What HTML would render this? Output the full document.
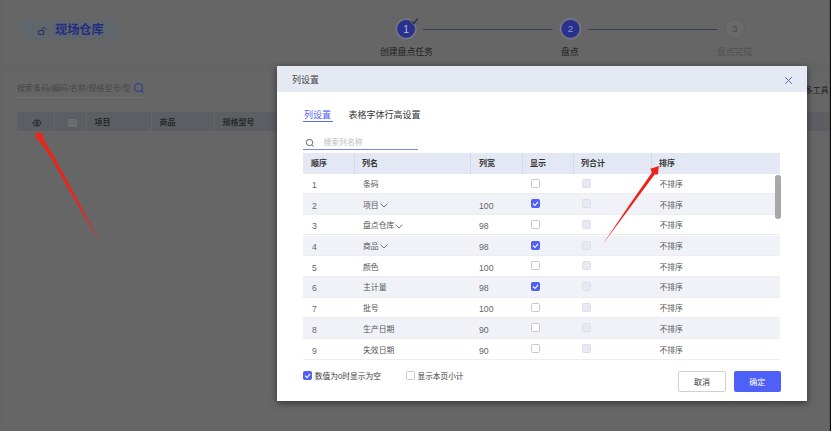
<!DOCTYPE html>
<html lang="zh-CN">
<head>
<meta charset="utf-8">
<title>列设置</title>
<style>
html,body{margin:0;padding:0;}
body{width:831px;height:431px;overflow:hidden;background:#646464;font-family:"Liberation Sans","Noto Sans CJK SC",sans-serif;font-size:8px;color:#333;position:relative;}
.abs{position:absolute;white-space:nowrap;line-height:1;}
#page{position:absolute;left:0;top:0;width:831px;height:431px;overflow:hidden;}
/* dimmed background page */
.tag{left:22px;top:19.5px;width:96px;height:20.5px;background:#60676c;border-radius:2px;}
.tagtxt{left:55px;top:24px;font-size:12.2px;font-weight:bold;color:#222d80;}
.bgtxt{color:#3f3f3f;}
.thead{left:17px;top:112px;width:814px;height:19.4px;background:#5c5e63;}
/* modal */
#modal{position:absolute;left:277px;top:66px;width:530px;height:334.5px;background:#fff;box-shadow:0 2px 7px rgba(0,0,0,.5);}
#mhead{position:absolute;left:0;top:0;width:530px;height:26px;background:#e5e9f4;}
.row{position:absolute;left:26px;width:477px;height:20.7px;}
.row.alt{background:#f0f2f8;}
.row{border-bottom:1px solid #ebedf3;box-sizing:border-box;}
.row .c.d{font-size:8.7px;color:#666}
.row .c{position:absolute;top:1.5px;line-height:20.7px;font-size:7.85px;color:#565656;white-space:nowrap;}
.dd{margin-left:1px;vertical-align:middle;position:relative;top:0px}
.ck{position:absolute;}
.row .sep{position:absolute;left:0;bottom:0;width:100%;height:1px;background:#eceef4}
.cb{position:absolute;width:7px;height:7px;border:1px solid #c8c8cc;border-radius:1.5px;background:#fff;box-sizing:content-box;}
.cb.on{background:#4f60f8;border-color:#4f60f8;}
.cb.dis{background:#e8eaf3;border-color:#dcdfea;}
</style>
</head>
<body>
<div id="page">
  <!-- background -->
  <div class="abs" style="left:4px;top:0;width:827px;height:63px;background:#666"></div>
  <div class="abs" style="left:4px;top:71px;width:827px;height:360px;background:#666"></div>
  <div class="abs tag"></div>
  <svg class="abs" style="left:36px;top:24px" width="12" height="12" viewBox="0 0 12 12"><path d="M2.6 6.6h5v3.8h-5zM6 6.6V5.6a1.9 1.9 0 0 1 3.8 0" fill="none" stroke="#232a60" stroke-width="0.9"/></svg>
  <div class="abs tagtxt">现场仓库</div>

  <!-- stepper -->
  <svg class="abs" style="left:380px;top:9px" width="400" height="40" viewBox="0 0 400 40">
    <line x1="43" y1="20.5" x2="172.5" y2="20.5" stroke="#3b3d5c" stroke-width="1"/>
    <line x1="207.5" y1="20.5" x2="337" y2="20.5" stroke="#3b3d5c" stroke-width="1"/>
    <circle cx="26.1" cy="19.9" r="10.1" fill="none" stroke="#767ca4" stroke-width="1"/>
    <circle cx="26.1" cy="19.9" r="8.8" fill="#28328c"/>
    <circle cx="190.5" cy="19.8" r="10.3" fill="none" stroke="#767ca4" stroke-width="1"/>
    <circle cx="190.5" cy="19.8" r="8.9" fill="#28328c"/>
    <circle cx="354.8" cy="19.8" r="10.3" fill="none" stroke="#626262" stroke-width="1"/>
    <circle cx="354.8" cy="19.8" r="8.9" fill="#6a6a6a"/>
    <path d="M32.0 12.6 L33.9 14.4 L37.7 9.6" fill="none" stroke="#666666" stroke-width="3.4" stroke-linecap="round"/>
    <path d="M32.0 12.6 L33.9 14.4 L37.7 9.6" fill="none" stroke="#1c2452" stroke-width="1.1"/>
    <text x="26.1" y="23.6" font-size="10.5" fill="#b4b8d6" text-anchor="middle" font-family="Liberation Sans, sans-serif">1</text>
    <text x="190.5" y="23.3" font-size="9.8" fill="#8f95cc" text-anchor="middle" font-family="Liberation Sans, sans-serif">2</text>
    <text x="354.8" y="23.4" font-size="9.8" fill="#484848" text-anchor="middle" font-family="Liberation Sans, sans-serif">3</text>
  </svg>
  <div class="abs" style="left:380px;top:48px;font-size:8.8px;color:#1c1c1c">创建盘点任务</div>
  <div class="abs" style="left:561px;top:48px;font-size:8.8px;color:#1c1c1c">盘点</div>
  <div class="abs" style="left:717px;top:48px;font-size:8.8px;color:#505050">盘点完成</div>

  <!-- search -->
  <div class="abs" style="left:17px;top:84.7px;font-size:8.1px;color:#474747;letter-spacing:-0.02px">搜索条码/编码/名称/规格型号/型</div>
  <svg class="abs" style="left:133px;top:82px" width="12" height="12" viewBox="0 0 12 12"><circle cx="5.5" cy="5.5" r="4" fill="none" stroke="#333f8c" stroke-width="1.2"/><line x1="8.5" y1="8.5" x2="10.5" y2="10.5" stroke="#333f8c" stroke-width="1.2"/></svg>
  <div class="abs" style="left:17px;top:97px;width:128px;height:1px;background:#707070"></div>

  <!-- bg table header -->
  <div class="abs thead"></div>
  <div class="abs" style="left:54px;top:112px;width:1px;height:19.4px;background:#65676c"></div>
  <div class="abs" style="left:86px;top:112px;width:1px;height:19.4px;background:#65676c"></div>
  <div class="abs" style="left:150.5px;top:112px;width:1px;height:19.4px;background:#65676c"></div>
  <div class="abs" style="left:214px;top:112px;width:1px;height:19.4px;background:#65676c"></div>
  <svg class="abs" style="left:30.5px;top:117.2px" width="12" height="12" viewBox="0 0 12 12"><path d="M1.9 6L4 3.2H8L10.1 6L8 8.8H4Z" fill="none" stroke="#1e1e1e" stroke-width="0.9"/><circle cx="6" cy="6" r="1.3" fill="none" stroke="#222" stroke-width="0.9"/></svg>
  <div class="abs" style="left:68px;top:118.8px;width:8.5px;height:8.5px;border:1px solid #707072;border-radius:1px;background:#6b6b6d;box-sizing:border-box"></div>
  <div class="abs bgtxt" style="left:94.5px;top:118.8px;font-weight:bold;color:#2a2a2a">项目</div>
  <div class="abs bgtxt" style="left:159.5px;top:118.8px;font-weight:bold;color:#2a2a2a">商品</div>
  <div class="abs bgtxt" style="left:222.5px;top:118.8px;font-weight:bold;color:#2a2a2a">规格型号</div>
  <div class="abs" style="left:804.8px;top:86.5px;font-size:8px;color:#222">多工具,</div>

  <!-- modal -->
  <div id="modal">
    <div id="mhead"></div>
    <div class="abs" style="left:15px;top:9.5px;font-size:9px;color:#444">列设置</div>
    <svg class="abs" style="left:507px;top:9.5px" width="9" height="9" viewBox="0 0 9 9"><path d="M1.2 1.2L7.8 7.8M7.8 1.2L1.2 7.8" stroke="#5f67b6" stroke-width="1" fill="none"/></svg>

    <div class="abs" style="left:27px;top:44.8px;font-size:9px;color:#4f60f8">列设置</div>
    <div class="abs" style="left:25.5px;top:54.6px;width:30px;height:1.5px;background:#5d6cf0"></div>
    <div class="abs" style="left:71.5px;top:44.8px;font-size:9px;color:#333">表格字体行高设置</div>

    <svg class="abs" style="left:28px;top:72px" width="10" height="10" viewBox="0 0 10 10"><circle cx="4.5" cy="4.5" r="3.2" fill="none" stroke="#555" stroke-width="0.9"/><line x1="7" y1="7" x2="8.6" y2="8.6" stroke="#555" stroke-width="0.9"/></svg>
    <div class="abs" style="left:46.5px;top:73px;font-size:7.8px;color:#bbb">搜索列名称</div>
    <div class="abs" style="left:26px;top:83px;width:115px;height:1px;background:#7b84e8"></div>

    <!-- table header -->
    <div class="abs" style="left:26px;top:86.5px;width:477px;height:21px;background:#e4e8f4"></div>
    <div class="abs" style="left:77px;top:86.5px;width:1px;height:21px;background:#d5d8e6"></div>
    <div class="abs" style="left:193px;top:86.5px;width:1px;height:21px;background:#d5d8e6"></div>
    <div class="abs" style="left:245px;top:86.5px;width:1px;height:21px;background:#d5d8e6"></div>
    <div class="abs" style="left:296px;top:86.5px;width:1px;height:21px;background:#d5d8e6"></div>
    <div class="abs" style="left:374px;top:86.5px;width:1px;height:21px;background:#d5d8e6"></div>
    <div class="abs" style="left:34px;top:94px;font-weight:bold;color:#333">顺序</div>
    <div class="abs" style="left:85px;top:94px;font-weight:bold;color:#333">列名</div>
    <div class="abs" style="left:202px;top:94px;font-weight:bold;color:#333">列宽</div>
    <div class="abs" style="left:253px;top:94px;font-weight:bold;color:#333">显示</div>
    <div class="abs" style="left:304px;top:94px;font-weight:bold;color:#333">列合计</div>
    <div class="abs" style="left:382px;top:94px;font-weight:bold;color:#333">排序</div>

    <div class="row" style="top:107.4px"><span class="c d" style="left:9px">1</span><span class="c" style="left:60px">条码</span><span class="cb" style="left:228px;top:5.2px"></span><span class="cb dis" style="left:279px;top:5.2px"></span><span class="c" style="left:356.4px">不排序</span></div>
    <div class="row alt" style="top:128.1px"><span class="c d" style="left:9px">2</span><span class="c" style="left:60px">项目<svg class="dd" width="8" height="5" viewBox="0 0 8 5"><path d="M0.5 0.7L4 4L7.5 0.7" fill="none" stroke="#555" stroke-width="0.8"/></svg></span><span class="c d" style="left:176px">100</span><span class="cb on" style="left:228px;top:5.2px"></span><svg class="ck" style="left:228px;top:5.2px" width="9" height="9" viewBox="0 0 9 9"><path d="M2 4.5L4 6.5L7 2.8" fill="none" stroke="#fff" stroke-width="1.1"/></svg><span class="cb dis" style="left:279px;top:5.2px"></span><span class="c" style="left:356.4px">不排序</span></div>
    <div class="row" style="top:148.8px"><span class="c d" style="left:9px">3</span><span class="c" style="left:60px">盘点仓库<svg class="dd" width="8" height="5" viewBox="0 0 8 5"><path d="M0.5 0.7L4 4L7.5 0.7" fill="none" stroke="#555" stroke-width="0.8"/></svg></span><span class="c d" style="left:176px">98</span><span class="cb" style="left:228px;top:5.2px"></span><span class="cb dis" style="left:279px;top:5.2px"></span><span class="c" style="left:356.4px">不排序</span></div>
    <div class="row alt" style="top:169.5px"><span class="c d" style="left:9px">4</span><span class="c" style="left:60px">商品<svg class="dd" width="8" height="5" viewBox="0 0 8 5"><path d="M0.5 0.7L4 4L7.5 0.7" fill="none" stroke="#555" stroke-width="0.8"/></svg></span><span class="c d" style="left:176px">98</span><span class="cb on" style="left:228px;top:5.2px"></span><svg class="ck" style="left:228px;top:5.2px" width="9" height="9" viewBox="0 0 9 9"><path d="M2 4.5L4 6.5L7 2.8" fill="none" stroke="#fff" stroke-width="1.1"/></svg><span class="cb dis" style="left:279px;top:5.2px"></span><span class="c" style="left:356.4px">不排序</span></div>
    <div class="row" style="top:190.2px"><span class="c d" style="left:9px">5</span><span class="c" style="left:60px">颜色</span><span class="c d" style="left:176px">100</span><span class="cb" style="left:228px;top:5.2px"></span><span class="cb dis" style="left:279px;top:5.2px"></span><span class="c" style="left:356.4px">不排序</span></div>
    <div class="row alt" style="top:210.9px"><span class="c d" style="left:9px">6</span><span class="c" style="left:60px">主计量</span><span class="c d" style="left:176px">98</span><span class="cb on" style="left:228px;top:5.2px"></span><svg class="ck" style="left:228px;top:5.2px" width="9" height="9" viewBox="0 0 9 9"><path d="M2 4.5L4 6.5L7 2.8" fill="none" stroke="#fff" stroke-width="1.1"/></svg><span class="cb dis" style="left:279px;top:5.2px"></span><span class="c" style="left:356.4px">不排序</span></div>
    <div class="row" style="top:231.6px"><span class="c d" style="left:9px">7</span><span class="c" style="left:60px">批号</span><span class="c d" style="left:176px">100</span><span class="cb" style="left:228px;top:5.2px"></span><span class="cb dis" style="left:279px;top:5.2px"></span><span class="c" style="left:356.4px">不排序</span></div>
    <div class="row alt" style="top:252.3px"><span class="c d" style="left:9px">8</span><span class="c" style="left:60px">生产日期</span><span class="c d" style="left:176px">90</span><span class="cb" style="left:228px;top:5.2px"></span><span class="cb dis" style="left:279px;top:5.2px"></span><span class="c" style="left:356.4px">不排序</span></div>
    <div class="row" style="top:273.0px"><span class="c d" style="left:9px">9</span><span class="c" style="left:60px">失效日期</span><span class="c d" style="left:176px">90</span><span class="cb" style="left:228px;top:5.2px"></span><span class="cb dis" style="left:279px;top:5.2px"></span><span class="c" style="left:356.4px">不排序</span></div>

    <!-- scrollbar -->
    <div class="abs" style="left:498px;top:109px;width:5.5px;height:43.5px;background:#a8a8a8;border-radius:2.7px"></div>

    <!-- footer -->
    <div class="cb on" style="left:25.5px;top:305.3px;width:7.2px;height:7.2px"></div>
    <svg class="abs" style="left:25.5px;top:305.3px" width="9.2" height="9.2" viewBox="0 0 9 9"><path d="M2 4.5L4 6.5L7 2.8" fill="none" stroke="#fff" stroke-width="1.1"/></svg>
    <div class="abs" style="left:37.8px;top:307px;font-size:7.75px;color:#3c3c3c">数值为0时显示为空</div>
    <div class="cb" style="left:128.5px;top:305.3px;width:7.2px;height:7.2px"></div>
    <div class="abs" style="left:140.6px;top:307px;font-size:7.65px;color:#3c3c3c">显示本页小计</div>

    <div class="abs" style="left:401px;top:305px;width:48px;height:20.5px;border:1px solid #d0d0d0;border-radius:2px;box-sizing:border-box;background:#fff;text-align:center;line-height:21.5px;color:#333">取消</div>
    <div class="abs" style="left:456.5px;top:305px;width:47.5px;height:20.5px;border-radius:2px;background:#4f60f8;text-align:center;line-height:23.5px;color:#fff">确定</div>
  </div>

  <div class="abs" style="left:830px;top:0;width:1px;height:431px;background:#0a0a0a"></div>
  <div class="abs" style="left:829px;top:0;width:1px;height:431px;background:#5a5a5a"></div>
  <!-- arrows -->
  <svg class="abs" style="left:0;top:0" width="831" height="431" viewBox="0 0 831 431">
    <polygon points="36.2,131.2 43.6,135.0 43.0,137.8 46.0,143.4 49.6,149.3 55.9,160 72.3,190 87.5,219 99.4,242.2 85.8,219 69.0,190 52.1,160 45.1,149.3 41.0,143.4 38.6,139.6 35.7,139.4" fill="#ea261c"/>
    <polygon points="658.9,166.0 657.9,174.6 654.7,174.4 631.6,205.6 602.6,244.4 629.8,204.3 651.9,172.6 650.4,168.8" fill="#ea261c"/>
  </svg>
</div>
</body>
</html>
